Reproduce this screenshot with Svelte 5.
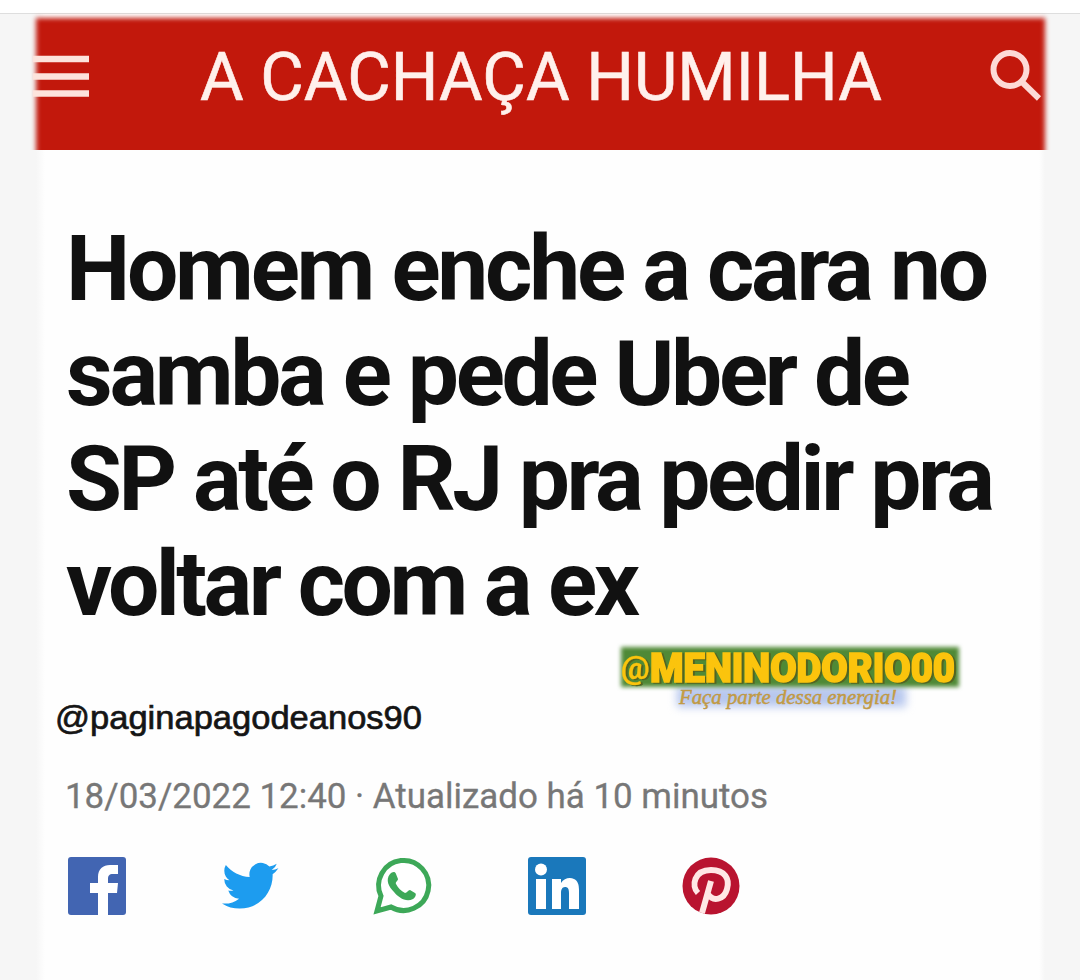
<script lang="ts">
  const title = 'A CACHAÇA HUMILHA'
  const headline = [
    { text: 'Homem enche a cara no', width: 923 },
    { text: 'samba e pede Uber de', width: 845 },
    { text: 'SP até o RJ pra pedir pra', width: 929 },
    { text: 'voltar com a ex', width: 574 },
  ]
</script>

<div class="screen">
  <article class="card">
    <header>
      <svg class="menu" width="58" height="48" viewBox="0 0 58 48">
        <path d="M0 7H56M0 24.500H56M0 41.500H56" stroke="#fde3dc" stroke-width="6.500" />
      </svg>
      <svg class="title" width="700" height="80">
        <text x="0" y="62" textLength="682" lengthAdjust="spacingAndGlyphs">{title}</text>
      </svg>
      <svg class="search" width="56" height="56" viewBox="0 0 56 56">
        <circle cx="21" cy="20.500" r="16.500" />
        <path d="M32.500 32.500L50 49.500" />
      </svg>
    </header>

    <h1>
      {#each headline as line}
        <svg width="960" height="105">
          <text x="-1" y="83.500" textLength={line.width} lengthAdjust="spacing">{line.text}</text>
        </svg>
      {/each}
    </h1>

    <div class="credits">
      <svg class="handle" width="400" height="50">
        <text x="-1" y="33" textLength="367" lengthAdjust="spacingAndGlyphs">@paginapagodeanos90</text>
      </svg>
      <div class="mark">
        <svg width="338" height="70">
          <text class="name" x="0" y="36">
            <tspan class="at" dy="-3">@</tspan><tspan x="29" dy="3" textLength="305" lengthAdjust="spacingAndGlyphs">MENINODORIO00</tspan>
          </text>
          <text class="motto" x="58" y="58" textLength="218" lengthAdjust="spacingAndGlyphs">Faça parte dessa energia!</text>
        </svg>
      </div>
    </div>

    <svg class="date" width="720" height="50">
      <text x="-1" y="36" textLength="703" lengthAdjust="spacingAndGlyphs">18/03/2022 12:40 · Atualizado há 10 minutos</text>
    </svg>

    <nav>
      <svg viewBox="0 0 58 58">
        <rect width="58" height="58" rx="3" fill="#4265b2" />
        <path d="M30 58V36H22V26H30V20C30 12 35 8 42 8H50V17H45C41 17 40 19 40 22V26H50L49 36H40V58Z" fill="#fff" />
      </svg>
      <svg viewBox="0 0 58 58">
        <g transform="translate(1 .5) scale(2.350)">
          <path fill="#1d9cef" d="M23.953 4.570a10 10 0 01-2.825.775 4.958 4.958 0 002.163-2.723c-.951.555-2.005.959-3.127 1.184a4.920 4.920 0 00-8.384 4.482C7.690 8.095 4.067 6.130 1.640 3.162a4.822 4.822 0 00-.666 2.475c0 1.710.870 3.213 2.188 4.096a4.904 4.904 0 01-2.228-.616v.060a4.923 4.923 0 003.946 4.827 4.996 4.996 0 01-2.212.085 4.936 4.936 0 004.604 3.417 9.867 9.867 0 01-6.102 2.105c-.390 0-.779-.023-1.170-.067a13.995 13.995 0 007.557 2.209c9.053 0 13.998-7.496 13.998-13.985 0-.210 0-.420-.015-.630A9.935 9.935 0 0024 4.590z" />
        </g>
      </svg>
      <svg viewBox="0 0 58 58">
        <path d="M2 54L6 39A25 25 0 1 1 16 50Z" fill="#fff" stroke="#3da858" stroke-width="5" />
        <path d="M15 17C17 15 20 14 21 17L23 22C23 24 20 25 21 27C23 31 26 34 30 36C32 36 33 33 35 33L40 36C42 37 40 41 38 42C31 46 23 40 19 35C14 30 10 23 15 17Z" fill="#3da858" />
      </svg>
      <svg viewBox="0 0 58 58">
        <rect width="58" height="58" rx="3" fill="#1a78bb" />
        <circle cx="13" cy="12.500" r="6" fill="#fff" />
        <path d="M8 22H18V52H8ZM24 22H33V26C36 21 42 20 46 22C50 24 51 28 51 33V52H41V36C41 32 40 30 37 30C34 30 33 33 33 36V52H24Z" fill="#fff" />
      </svg>
      <svg viewBox="0 0 58 58">
        <circle cx="29" cy="29" r="28.500" fill="#b91430" />
        <path d="M16 36C9 29 12 13 29 13C43 13 48 22 45 32C42 43 31 45 26 37M29 24L20 56" fill="none" stroke="#ffe7e5" stroke-width="6" />
      </svg>
    </nav>
  </article>
</div>

<style>
  :global(body) {
    margin: 0;
    background: #fff;
  }

  .screen {
    box-sizing: border-box;
    height: 980px;
    padding-top: 13px;
    overflow: hidden;
    background: linear-gradient(#fff 13px, #dedede 13px, #dedede 14px, #f6f6f6 14px);
  }

  .card {
    width: 1009px;
    height: 967px;
    margin-left: 36px;
    background: linear-gradient(90deg, #f6f6f6, #fefefe 9px, #fefefe 1003px, #f6f6f6);
    background-position: 0 1px;
    background-repeat: no-repeat;
    font-family: Roboto, sans-serif;
  }

  svg {
    display: block;
    overflow: visible;
    flex: none;
  }

  header {
    position: relative;
    display: flex;
    height: 137px;
    isolation: isolate;
  }

  header::before {
    content: '';
    position: absolute;
    inset: 5px 0 -12px 0;
    z-index: -1;
    background: #c2180c;
    filter: blur(2.5px);
    clip-path: inset(-6px -6px 12px -6px);
  }

  .menu {
    margin: 39px 0 0 -3px;
  }

  .title {
    margin: 25px 0 0 109px;
    font-size: 67px;
    fill: #fff0ec;
    stroke: #fff0ec;
    stroke-width: 0.6;
  }

  .search {
    margin: 36px 0 0 89px;
    fill: none;
    stroke: #fddad6;
    stroke-width: 6;
  }

  h1 {
    margin: 66px 0 0 31px;
    font-size: 91px;
    font-weight: 700;
    fill: #111;
  }

  .credits {
    display: flex;
    height: 133px;
  }

  .handle {
    margin: 60px 0 0 20px;
    font-family: 'Liberation Sans', sans-serif;
    font-size: 34px;
    fill: #151515;
    stroke: #151515;
    stroke-width: 0.7;
  }

  .mark {
    position: relative;
    height: 70px;
    margin: 10px 0 0 165px;
    isolation: isolate;
  }

  .mark::before,
  .mark::after {
    content: '';
    position: absolute;
    z-index: -1;
    filter: blur(2px);
  }

  .mark::before {
    inset: 1px 0 29px 0;
    background: #4f8936;
  }

  .mark::after {
    inset: 40px 53px 9px 56px;
    z-index: -2;
    background: #b7c7ee;
    filter: blur(4px);
  }

  .name {
    font-size: 40px;
    font-weight: 900;
    fill: #fbc40d;
    stroke: #fbc40d;
    stroke-width: 1.6;
    filter: drop-shadow(2px 1px 0 #526422);
  }

  .at {
    font-size: 32px;
    font-weight: 700;
    stroke-width: 0.3;
  }

  .motto {
    font-family: 'Liberation Serif', serif;
    font-size: 22px;
    font-style: italic;
    fill: #c99f42;
    stroke: #bb9545;
    stroke-width: 0.5;
  }

  .date {
    margin: 3px 0 0 30px;
    font-size: 35px;
    fill: #777;
    stroke: #777;
    stroke-width: 0.3;
  }

  nav {
    display: flex;
    gap: 95.500px;
    margin: 35px 0 0 31.500px;
  }

  nav svg {
    width: 58px;
    height: 58px;
  }
</style>
